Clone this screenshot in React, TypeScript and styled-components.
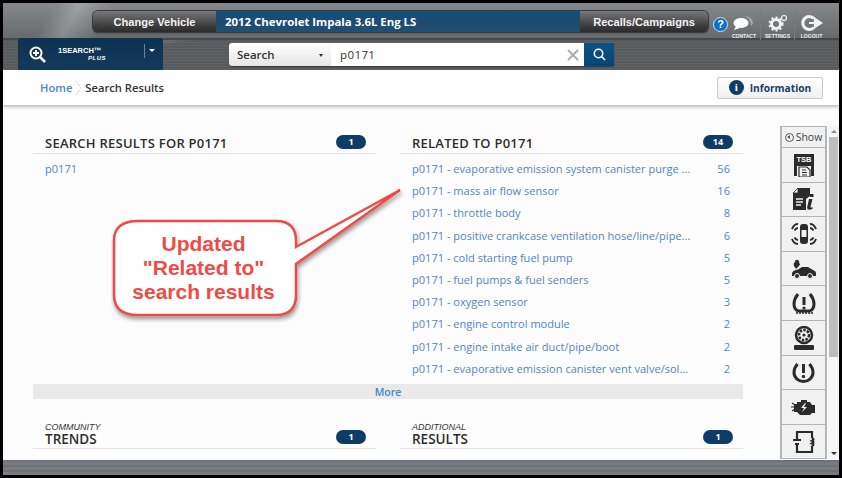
import React from "react";
import styled, { createGlobalStyle } from "styled-components";

const Global = createGlobalStyle`
  html, body { margin: 0; padding: 0; background: #000; }
  * { box-sizing: border-box; }
`;

const Frame = styled.div`
  width: 842px; height: 478px; background: #000; padding: 3px;
  font-family: "Open Sans", "Liberation Sans", sans-serif; overflow: hidden;
`;
const Page = styled.div`
  position: relative; width: 836px; height: 472px; display: flex; flex-direction: column;
  background: #fcfcfc; overflow: hidden;
`;
const Header = styled.header`
  height: 67px; flex: none; padding-left: 15px; display: flex; flex-direction: column;
  background:
    linear-gradient(172deg, rgba(255,255,255,0) 0 34%, rgba(255,255,255,.2) 42%, rgba(255,255,255,0) 52%) 150px 0 / 120px 100% no-repeat,
    repeating-linear-gradient(180deg, #5f6366 0 1px, #575b5e 1px 3px);
`;
const TopRow = styled.div`
  height: 37px; margin-left: -15px; padding: 8px 0 0 90px; display: flex; align-items: flex-start;
  background:
    linear-gradient(118deg, rgba(255,255,255,0) 0 6%, rgba(255,255,255,.22) 9%, rgba(255,255,255,0) 13%),
    linear-gradient(180deg, #85898c, #666a6d);
  border-bottom: 2px solid #45494c;
`;
const VehicleBar = styled.div`
  width: 615px; height: 21px; display: flex; color: #fff; font-size: 11.4px; font-weight: 700;
  border-radius: 5px; box-shadow: 0 0 0 1px #3c3c3c, 0 1px 2px rgba(0,0,0,.5); overflow: hidden;
`;
const BarButton = styled.div<{ $w: number }>`
  width: ${p => p.$w}px; flex: none; display: flex; align-items: center; justify-content: center;
  background: linear-gradient(180deg, #77787a 0%, #3d3d3e 70%, #2c2c2d 100%);
  color: #f2f2f2; font: 700 11.1px "Liberation Sans", sans-serif;
`;
const VehicleName = styled.div`
  flex: 1; display: flex; align-items: center; padding-left: 9px;
  background: linear-gradient(180deg, #12507c 0%, #1d4b70 55%, #234f70 100%);
`;
const HelpDot = styled.div`
  width: 15px; height: 15px; margin: 6px 0 0 5px; flex: none; border-radius: 50%; background: #0a72c4;
  border: 1px solid #d5e3ee; color: #fff; font: 700 11px/13px "Liberation Sans", sans-serif; text-align: center;
`;
const ToolLink = styled.div<{ $w: number; $sep?: boolean }>`
  width: ${p => p.$w}px; height: 30px; flex: none; margin-top: -1px; display: flex; flex-direction: column; align-items: center;
  justify-content: flex-end; color: #eee; font: 700 5px/7px "Liberation Sans", sans-serif;
  border-left: ${p => (p.$sep ? "1px solid #777b7e" : "none")};
  svg { display: block; margin-bottom: 1px; }
`;
const SearchRow = styled.div`
  height: 30px; display: flex; align-items: flex-start; position: relative;
`;
const SearchBrand = styled.div`
  width: 145px; height: 32px; margin-top: -2px; flex: none; display: flex; align-items: center; padding: 0 8px 0 11px;
  border-radius: 3px 3px 0 0; color: #fff;
  background: linear-gradient(180deg, #0e3150, #133a5d);
`;
const BrandText = styled.div`
  margin-left: 12px; flex: 1; font: 700 7.5px/8px "Liberation Sans", sans-serif;
`;
const BrandPlus = styled.div`
  font: italic 700 6px/7px "Liberation Sans", sans-serif; letter-spacing: .5px; padding-left: 30px;
`;
const BrandCaret = styled.div`
  border-left: 1px solid #6b8297; height: 14px; margin-top: -6px; padding: 5px 0 0 4px;
  &::after { content: ""; display: block; width: 0; height: 0; border: 3px solid transparent; border-top: 3px solid #fff; }
`;
const SearchGroup = styled.div`
  margin: 3px 0 0 66px; height: 23px; display: flex; box-shadow: 0 1px 1px rgba(0,0,0,.4); border-radius: 3px 0 0 3px;
`;
const SearchSelect = styled.div`
  width: 102px; display: flex; align-items: center; justify-content: space-between; padding: 0 8px; font-size: 11.5px; font-weight: 600;
  color: #333; background: linear-gradient(180deg, #fff, #e6e6e6); border-radius: 3px 0 0 3px;
  &::after { content: ""; width: 0; height: 0; margin-top: 3px; border: 2.5px solid transparent; border-top: 3px solid #333; }
`;
const SearchInput = styled.div`
  width: 253px; background: #fff; display: flex; align-items: center; justify-content: space-between;
  padding: 0 5px 0 9px; font-size: 11.5px; color: #333; letter-spacing: .4px;
`;
const SearchGo = styled.div`
  width: 30px; display: flex; align-items: center; justify-content: center; background: linear-gradient(180deg, #0b5288, #064674);
`;
const Crumbs = styled.nav`
  height: 35px; flex: none; display: flex; align-items: center; padding: 0 16px 0 37px; font-size: 11.2px; font-weight: 600; color: #333;
  background: #fff; box-shadow: 0 2px 3px rgba(0,0,0,.25); position: relative;
`;
const CrumbLink = styled.span`
  color: #4a86c8;
`;
const CrumbSep = styled.span`
  width: 5px; height: 14px; margin: 0 4px; flex: none;
  background: linear-gradient(to top right, transparent 46%, #ccc 50%, transparent 56%) top / 100% 50% no-repeat,
    linear-gradient(to bottom right, transparent 46%, #ccc 50%, transparent 56%) bottom / 100% 50% no-repeat;
`;
const InfoButton = styled.div`
  margin-left: auto; width: 106px; height: 22px; display: flex; align-items: center; justify-content: center; gap: 6px; border-radius: 2px;
  color: #123f68; font-size: 10.2px; font-weight: 700; background: linear-gradient(180deg, #fff, #f0f0f0); border: 1px solid #c9c9c9;
`;
const InfoDot = styled.span`
  width: 15px; height: 15px; border-radius: 50%; background: #0e3c66; color: #fff; font: 700 11px/15px "Liberation Serif", serif; text-align: center;
`;
const Body = styled.div`
  flex: 1; min-height: 0; display: flex; padding-left: 30px;
`;
const Results = styled.main`
  width: 710px; flex: none; padding-top: 22px;
`;
const Columns = styled.div`
  display: flex; gap: 24px;
`;
const Column = styled.section`
  width: 343px; flex: none;
`;
const SectionHead = styled.div`
  height: 27px; display: flex; align-items: flex-end; justify-content: space-between;
  padding: 0 10px 2px 12px; border-bottom: 1px solid #e3e3e3;
`;
const SectionTitle = styled.h2`
  margin: 0 0 -1px; font: 600 13px/17px "Open Sans", sans-serif; color: #2d2d2d; letter-spacing: .25px;
`;
const BigTitle = styled.h2`
  margin: 0; font: 600 13.5px/14px "Open Sans", sans-serif; color: #2d2d2d;
`;
const Eyebrow = styled.div`
  font: italic 500 9px/10px "Liberation Sans", sans-serif; color: #333;
`;
const Badge = styled.span`
  width: 30px; height: 14px; margin-bottom: 2px; border-radius: 7px; background: #0e3c66; color: #fff;
  font: 700 9px/14px "Open Sans", sans-serif; text-align: center;
`;
const ResultList = styled.ul`
  list-style: none; margin: 4px 0 0; padding: 0; height: 226px;
`;
const ResultRow = styled.li`
  height: 22.2px; display: flex; justify-content: space-between; padding: 0 13px 0 12px;
  font-size: 11.05px; line-height: 22px; color: #5285c5;
`;
const RowText = styled.span`
  white-space: nowrap;
`;
const MoreBar = styled.div`
  height: 15px; background: #e9e9e9; color: #4a86c8; font-size: 10.5px; font-weight: 600; line-height: 16px; text-align: center;
`;
const LowerColumns = styled(Columns)`
  margin-top: 23px;
`;
const Side = styled.aside`
  margin: 21px 0 0 37px; width: 47px; height: 333px; flex: none; display: flex; flex-direction: column; background: #f1f1f1;
  border: 1px solid #b5b5b5; border-width: 1px 2px 1px 2px;
`;
const ShowCell = styled.div`
  height: 21px; flex: none; display: flex; align-items: center; justify-content: center; gap: 2px; font-size: 10.5px; color: #444;
  border-bottom: 1px solid #b5b5b5;
`;
const ShowIcon = styled.span`
  width: 9px; height: 9px; border-radius: 50%; border: 1px solid #555; display: flex; align-items: center; justify-content: center;
  &::after { content: ""; border: 2px solid transparent; border-right: 3px solid #555; margin-left: -3px; }
`;
const IconCell = styled.div`
  height: 34.6px; flex: none; display: flex; align-items: center; justify-content: center; border-bottom: 1px solid #b5b5b5;
  &:last-child { border-bottom: none; }
`;
const ScrollBar = styled.div`
  width: 11px; height: 333px; margin: 21px 0 0 1px; flex: none; display: flex; flex-direction: column; align-items: center; background: #f6f6f6;
`;
const ScrollArrow = styled.span<{ $up?: boolean }>`
  flex: none; margin: 4px 0; width: 0; height: 0; border: 3px solid transparent;
  ${p => (p.$up ? "border-bottom: 3px solid #888; border-top: 0;" : "border-top: 3px solid #333; border-bottom: 0;")}
`;
const ScrollThumb = styled.div`
  width: 9px; height: 220px; background: #bdbdbd;
`;
const ScrollGap = styled.div`
  flex: 1;
`;
const Footer = styled.footer`
  height: 15px; flex: none; background: repeating-linear-gradient(180deg, #6e7377 0 2px, #787c80 2px 5px);
`;
const Callout = styled.div`
  position: absolute; left: 108px; top: 185px; width: 295px; height: 135px;
  svg { position: absolute; left: 0; top: 0; }
`;
const CalloutText = styled.div`
  position: absolute; left: 1px; top: 44px; width: 183px; text-align: center; color: #ee4b46; white-space: nowrap;
  font: 700 21px/24px "Liberation Sans", sans-serif;
`;

const related: [string, number][] = [
  ["p0171 - evaporative emission system canister purge ...", 56],
  ["p0171 - mass air flow sensor", 16],
  ["p0171 - throttle body", 8],
  ["p0171 - positive crankcase ventilation hose/line/pipe...", 6],
  ["p0171 - cold starting fuel pump", 5],
  ["p0171 - fuel pumps & fuel senders", 5],
  ["p0171 - oxygen sensor", 3],
  ["p0171 - engine control module", 2],
  ["p0171 - engine intake air duct/pipe/boot", 2],
  ["p0171 - evaporative emission canister vent valve/sol...", 2],
];

const D = "#2b2b2b";
const sideIcons: React.ReactNode[] = [
  <svg key="tsb" width="22" height="24" viewBox="0 0 22 24">
    <path d="M1 1h20v22h-3v-10H4v10H1z" fill={D} />
    <path d="M6 14h8l3 3v7H6z" fill="#f4f4f4" stroke={D} strokeWidth="1.2" />
    <path d="M9 17h4M9 19.500h5M9 22h5" stroke={D} strokeWidth="1.2" />
    <text x="11" y="9" textAnchor="middle" fill="#fff" fontSize="7.5" fontWeight="700" fontFamily="Liberation Sans">TSB</text>
  </svg>,
  <svg key="info" width="23" height="24" viewBox="0 0 23 24">
    <path d="M6 1h12v8l-4 3v11H1V6z" fill={D} />
    <path d="M6 1v5H1z" fill="#f1f1f1" stroke={D} strokeWidth=".8" />
    <path d="M4 12h7M4 15h7M4 18h5" stroke="#f1f1f1" strokeWidth="1.5" />
    <path d="M18 7h3.500v3H18zM17 12h3.500l-2 8q0 1 2 0v2q-5 2-5.500-1z" fill={D} />
  </svg>,
  <svg key="sensors" width="26" height="24" viewBox="0 0 26 24" fill="none" stroke={D}>
    <rect x="9" y="2" width="8" height="20" rx="3" fill={D} stroke="none" />
    <rect x="10.500" y="8" width="5" height="7" fill="#f1f1f1" stroke="none" />
    <path d="M7 2Q3 2 1 7M7 6Q5 6 3.500 8.500M19 2Q23 2 25 7M19 6Q21 6 22.500 8.500M7 22Q3 22 1 17M7 18Q5 18 3.500 15.500M19 22Q23 22 25 17M19 18Q21 18 22.500 15.500" strokeWidth="2" />
  </svg>,
  <svg key="hood" width="25" height="20" viewBox="0 0 25 20">
    <path d="M1 14q1-3 6-3.500l4-2.500h6l5 3q3 1 3 3v3H1z" fill={D} />
    <circle cx="6" cy="17" r="2.500" fill={D} stroke="#f1f1f1" />
    <circle cx="19" cy="17" r="2.500" fill={D} stroke="#f1f1f1" />
    <path d="M3 7q-1-3 1-4q0-3 3-2q2 1 1 3q2 1 0 3q-2 2-3 3z" fill={D} />
  </svg>,
  <svg key="tpms" width="24" height="22" viewBox="0 0 24 22" fill="none">
    <path d="M6 2Q2 7 2 12t4 7h12q4-2 4-7t-4-10" stroke={D} strokeWidth="3" />
    <path d="M5 20v2M8 20v2M11 20v2M14 20v2M17 20v2M20 20v2" stroke={D} strokeWidth="1.500" />
    <path d="M12 5v8" stroke={D} strokeWidth="3" />
    <circle cx="12" cy="16" r="1.600" fill={D} />
  </svg>,
  <svg key="tire" width="22" height="24" viewBox="0 0 22 24">
    <circle cx="11" cy="9" r="8" fill="none" stroke={D} strokeWidth="2.500" />
    <circle cx="11" cy="9" r="5" fill="none" stroke={D} strokeWidth="2.500" strokeDasharray="2.500 1.200" />
    <circle cx="11" cy="9" r="1.600" fill={D} />
    <rect x="1" y="19" width="20" height="5" rx="1" fill={D} />
  </svg>,
  <svg key="tpms2" width="23" height="22" viewBox="0 0 23 22" fill="none">
    <path d="M5.500 3Q2 7 2 11.500a9.500 9 0 0 0 19 0Q21 7 17.500 3" stroke={D} strokeWidth="3" />
    <path d="M11.500 3v9" stroke={D} strokeWidth="3" />
    <circle cx="11.500" cy="15.500" r="1.700" fill={D} />
  </svg>,
  <svg key="engine" width="25" height="18" viewBox="0 0 25 18">
    <path d="M6 4h4V2h6v2h3l2 3h3v8h-3l-2 2H9l-3-3H3V6h3z" fill={D} />
    <path d="M1 5l3 2M0 9h3M1 13l3-2" stroke={D} strokeWidth="1.200" />
    <path d="M14 5l-4 5h3l-2 4 5-5h-3l2-4z" fill="#f1f1f1" />
  </svg>,
  <svg key="module" width="24" height="24" viewBox="0 0 24 24" fill="none" stroke={D} strokeWidth="2.200">
    <path d="M5 9V2h15v6M5 15v7h15v-6" />
    <path d="M1 10h8M3 14h4M20 8q3 1 0 2.700q3 1 0 2.700q3 1 0 2.700" />
  </svg>,
];

export default function App() {
  return (
    <Frame>
      <Global />
      <Page>
        <Header>
          <TopRow>
            <VehicleBar>
              <BarButton $w={123}>Change Vehicle</BarButton>
              <VehicleName>2012 Chevrolet Impala 3.6L Eng LS</VehicleName>
              <BarButton $w={128}>Recalls/Campaigns</BarButton>
            </VehicleBar>
            <HelpDot>?</HelpDot>
            <ToolLink $w={32}>
              <svg width="24" height="17" viewBox="0 0 24 17">
                <path d="M12 1a9 7 0 0 1 9 7l-2 3a9 9 0 0 0-7-10z" fill="#a9adb0" />
                <ellipse cx="9" cy="8" rx="7.500" ry="5" fill="#fff" />
                <path d="M4 11l-2 4 6-2z" fill="#fff" />
              </svg>
              CONTACT
            </ToolLink>
            <ToolLink $w={34} $sep>
              <svg width="20" height="18" viewBox="0 0 20 18" fill="none">
                <circle cx="8" cy="10" r="4.500" stroke="#f2f2f2" strokeWidth="3" />
                <circle cx="8" cy="10" r="6.500" stroke="#f2f2f2" strokeWidth="2" strokeDasharray="2 2.200" />
                <circle cx="16" cy="4" r="2.500" stroke="#f2f2f2" strokeWidth="1.200" />
              </svg>
              SETTINGS
            </ToolLink>
            <ToolLink $w={34} $sep>
              <svg width="22" height="18" viewBox="0 0 22 18" fill="none">
                <path d="M13 4.500A6.500 6.500 0 1 0 13 13.500" stroke="#f2f2f2" strokeWidth="3" />
                <path d="M8 9h8M14 5l6 4-6 4z" stroke="#f2f2f2" strokeWidth="2.200" fill="#f2f2f2" />
              </svg>
              LOGOUT
            </ToolLink>
          </TopRow>
          <SearchRow>
            <SearchBrand>
              <svg width="17" height="17" viewBox="0 0 17 17" fill="none">
                <circle cx="7" cy="7" r="5.500" stroke="#fff" strokeWidth="2" />
                <path d="M11 11l5 5" stroke="#fff" strokeWidth="2.500" />
                <path d="M7 4v6M4 7h6" stroke="#fff" strokeWidth="1.800" />
              </svg>
              <BrandText>
                1SEARCH™
                <BrandPlus>PLUS</BrandPlus>
              </BrandText>
              <BrandCaret />
            </SearchBrand>
            <SearchGroup>
              <SearchSelect>Search</SearchSelect>
              <SearchInput>
                p0171
                <svg width="12" height="12" viewBox="0 0 12 12">
                  <path d="M1 1l10 10M11 1L1 11" stroke="#aaa" strokeWidth="1.800" />
                </svg>
              </SearchInput>
              <SearchGo>
                <svg width="13" height="13" viewBox="0 0 13 13" fill="none">
                  <circle cx="5.500" cy="5.500" r="4.200" stroke="#fff" strokeWidth="1.500" />
                  <path d="M8.500 8.500l3.500 3.500" stroke="#fff" strokeWidth="1.600" />
                </svg>
              </SearchGo>
            </SearchGroup>
          </SearchRow>
        </Header>
        <Crumbs>
          <CrumbLink>Home</CrumbLink>
          <CrumbSep />
          Search Results
          <InfoButton>
            <InfoDot>i</InfoDot>
            Information
          </InfoButton>
        </Crumbs>
        <Body>
          <Results>
            <Columns>
              <Column>
                <SectionHead>
                  <SectionTitle>SEARCH RESULTS FOR P0171</SectionTitle>
                  <Badge>1</Badge>
                </SectionHead>
                <ResultList>
                  <ResultRow>
                    <RowText>p0171</RowText>
                  </ResultRow>
                </ResultList>
              </Column>
              <Column>
                <SectionHead>
                  <SectionTitle>RELATED TO P0171</SectionTitle>
                  <Badge>14</Badge>
                </SectionHead>
                <ResultList>
                  {related.map(([label, n]) => (
                    <ResultRow key={label}>
                      <RowText>{label}</RowText>
                      <span>{n}</span>
                    </ResultRow>
                  ))}
                </ResultList>
              </Column>
            </Columns>
            <MoreBar>More</MoreBar>
            <LowerColumns>
              <Column>
                <SectionHead>
                  <div>
                    <Eyebrow>COMMUNITY</Eyebrow>
                    <BigTitle>TRENDS</BigTitle>
                  </div>
                  <Badge>1</Badge>
                </SectionHead>
              </Column>
              <Column>
                <SectionHead>
                  <div>
                    <Eyebrow>ADDITIONAL</Eyebrow>
                    <BigTitle>RESULTS</BigTitle>
                  </div>
                  <Badge>1</Badge>
                </SectionHead>
              </Column>
            </LowerColumns>
          </Results>
          <Side>
            <ShowCell>
              <ShowIcon />
              Show
            </ShowCell>
            {sideIcons.map((icon, i) => (
              <IconCell key={i}>{icon}</IconCell>
            ))}
          </Side>
          <ScrollBar>
            <ScrollArrow $up />
            <ScrollThumb />
            <ScrollGap />
            <ScrollArrow />
          </ScrollBar>
        </Body>
        <Footer />
        <Callout>
          <svg width="295" height="135" viewBox="0 0 295 135">
            <defs>
              <filter id="sh" x="-10%" y="-10%" width="120%" height="130%">
                <feDropShadow dx="1" dy="3" stdDeviation="2" floodColor="#000" floodOpacity=".4" />
              </filter>
            </defs>
            <path
              d="M27 33H165Q185 33 185 53V59L289 2 185 76V107Q185 127 165 127H27Q3 127 3 107V53Q3 33 27 33Z"
              fill="#fff"
              stroke="#ee4b46"
              strokeWidth="2.500"
              filter="url(#sh)"
            />
          </svg>
          <CalloutText>
            Updated
            <br />
            "Related to"
            <br />
            search results
          </CalloutText>
        </Callout>
      </Page>
    </Frame>
  );
}
